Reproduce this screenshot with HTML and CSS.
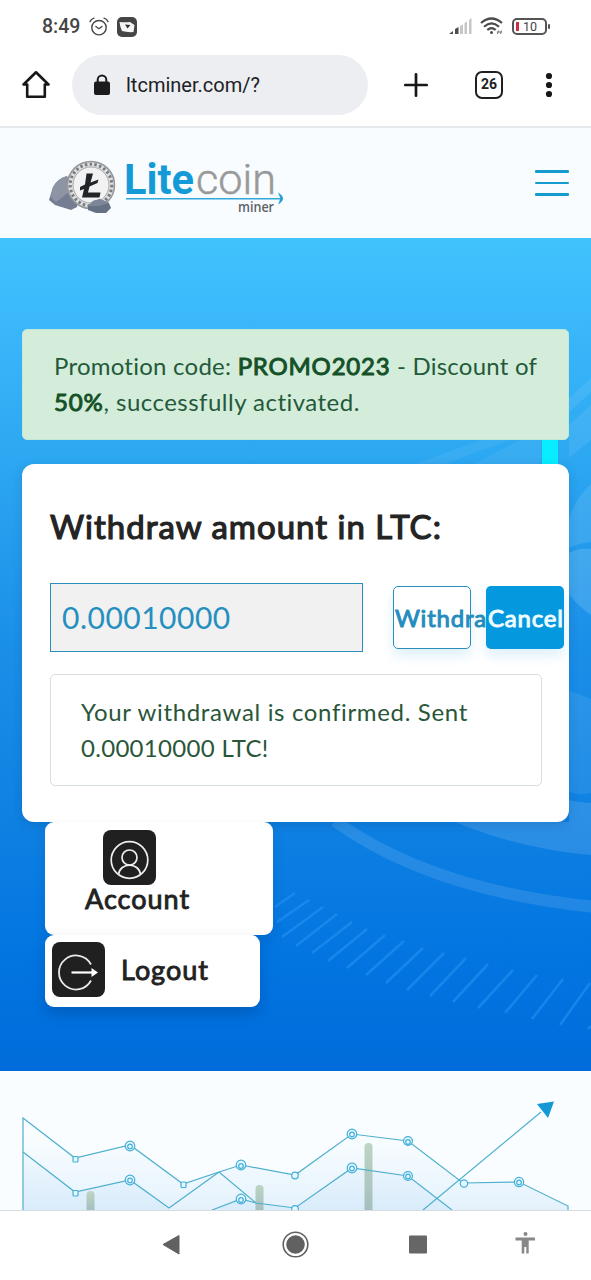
FILE: index.html
```html
<!DOCTYPE html>
<html lang="en">
<head>
<meta charset="utf-8">
<title>Litecoin miner</title>
<link rel="stylesheet" href="styles.css">
</head>
<body>
<div class="phone">
  <div class="status">
    <span class="clock">8:49</span>
    <svg class="alarm" width="20" height="20" viewBox="0 0 20 20" fill="none" stroke="#454545" stroke-width="1.4" stroke-linecap="round"><circle cx="10" cy="10.7" r="7.2"/><path d="M6.9 9.5l3 2.2 3-2.2M1 4.6Q2.2 2 5 1.2M19 4.6Q17.800 2 15 1.200"/></svg>
    <svg class="video" width="20" height="20" viewBox="0 0 20 20"><rect width="20" height="20" rx="5" fill="#454545"/><path d="M2.500 5Q8 5.500 13 5L17.500 8Q17 12 16.500 15Q10 15.500 5 14Q3 10 2.500 5Z" fill="#f5f5f5"/><path d="M8 7.500L13.500 8L10.500 11.500Z" fill="#333"/></svg>
    <svg class="signal" width="23" height="17" viewBox="0 0 23 17"><path d="M0 16L4 13V16ZM6 11L9.500 9V16H6Z" fill="#4d4d4d"/><path d="M11 8L14 6.500V16H11ZM15.500 5L18 3.500V16H15.500ZM20 2L22.500 0V16H20Z" fill="#c6c6c6"/></svg>
    <svg class="wifi" width="24" height="19" viewBox="0 0 24 19" fill="none" stroke="#4a4a4a" stroke-width="2.200"><path d="M1 6Q11.500-3 22 6M4 9.700Q11.500 3 19 9.700M7.300 13Q11.500 9.300 15.700 13"/><circle cx="11.500" cy="15.500" r="1.500" fill="#4a4a4a" stroke="none"/><path d="M18.500 13.500L17.500 17M21.500 13.500L20.500 17M17 15H22" stroke="#777" stroke-width="1"/></svg>
    <span class="battery"><i></i>10</span>
  </div>

  <div class="toolbar">
    <svg class="home" width="28" height="29" viewBox="0 0 28 29" fill="none" stroke="#171717" stroke-width="2.600" stroke-linejoin="round"><path d="M1.500 14.500L14 2.300L26.500 14.500H22.800V26.700H5.200V14.500Z"/></svg>
    <div class="address">
      <svg width="18" height="22" viewBox="0 0 18 22"><rect x="1" y="7.500" width="16" height="13.500" rx="2" fill="#1b1b1e"/><path d="M4.700 8V5.700a4.300 4.300 0 0 1 8.600 0V8" fill="none" stroke="#1b1b1e" stroke-width="2"/></svg>
      <span>ltcminer.com/?</span>
    </div>
    <svg class="plus" width="24" height="24" viewBox="0 0 24 24" stroke="#171717" stroke-width="2.700" stroke-linecap="round"><path d="M12 1.300V22.700M1.300 12H22.700"/></svg>
    <span class="tabs">26</span>
    <svg class="dots" width="8" height="26" viewBox="0 0 8 26" fill="#171717"><circle cx="4" cy="4" r="3.100"/><circle cx="4" cy="13" r="3.100"/><circle cx="4" cy="22" r="3.100"/></svg>
  </div>

  <header class="header">
    <svg class="logo" width="250" height="70" viewBox="0 0 250 70">
      <path d="M1 44L5 31Q9 23 19 20L31 43L29 51L23 54L7 49Z" fill="#747d91"/>
      <path d="M5 31Q9 23 19 20L20 37L8 46L3 41Z" fill="#8d94a4"/>
      <circle cx="43" cy="29" r="23.500" fill="#dedfe1" stroke="#96989b" stroke-width="1.600"/>
      <circle cx="43" cy="29" r="20.800" fill="none" stroke="#777b7e" stroke-width="3" stroke-dasharray="2.400 2.400"/>
      <circle cx="43" cy="29" r="18" fill="#f2f2f3" stroke="#aaa" stroke-width="1"/>
      <path d="M38.500 17.500H45L42.500 26.500L50.500 23.500L49.500 27L41.500 30.500L40 36.500H52.500L51.500 41.500H34L36 33L32 34.500V31L37 28.500Z" fill="#222527"/>
      <path d="M40 50L45 45L52 43L61 47L63 52L58 57H48L40 54Z" fill="#667184"/>
      <path d="M40 50L45 45L52 43L61 47L51 50Z" fill="#7d8798"/>
      <text class="word lite" x="76" y="37.500" textLength="70" lengthAdjust="spacingAndGlyphs">Lite</text>
      <text class="word coin" x="148" y="37.500" textLength="80" lengthAdjust="spacingAndGlyphs">coin</text>
      <path d="M78 42.700H233" stroke="#31a8db" stroke-width="1.400"/><path d="M230 36.500Q240 42.500 230 48.500L232.500 42.500Z" fill="#229fd6"/>
      <text class="word mine" x="190" y="56" textLength="36" lengthAdjust="spacingAndGlyphs">miner</text>
    </svg>
    <span class="menu"><i></i><i></i><i></i></span>
  </header>

  <main class="hero">
    <svg class="scenery" width="591" height="833" viewBox="0 238 591 833">
      <g fill="#fff">
        <path d="M569 398L591 378V392L569 412ZM569 425L591 405V440L569 458Z" opacity=".08"/>
        <path d="M410 466L480 440H510L440 466ZM470 466L520 440H541V462L535 466Z" opacity=".06"/>
        <path d="M569 520Q575 498 591 484V542Q579 543 569 548Z" opacity=".1"/>
        <path d="M569 553Q578 548 591 549V615Q578 606 569 594Z" opacity=".14"/>
        <path d="M569 691Q580 694 591 699V793Q580 796 569 792Z" opacity=".08"/>
        <path d="M455 822Q520 849 591 855V803Q577 802 569 800V822Z" opacity=".12"/>
      </g>
      <path d="M335 821Q430 890 595 907" fill="none" stroke="#fff" stroke-width="12" opacity=".11"/>
      <rect x="542" y="438" width="16" height="28" fill="#08edff"/>
      <path d="M275 907L295 893M277 922L309 900M282 937L323 907M296 946L337 914M312 953L352 922M328 961L367 929M347 968L385 935M366 975L404 941M386 983L423 948M407 990L444 953M430 996L466 958M453 1002L488 964M478 1008L513 970M505 1013L537 975M532 1019L563 979M560 1025L590 983M588 1029L591 1026" stroke="#2c98f5" stroke-width="2.600" opacity=".5"/>
    </svg>

    <div class="promo"><span class="p1">Promotion code: <b>PROMO2023</b> - Discount of</span><br><span class="p2"><b>50%</b>, successfully activated.</span></div>

    <section class="card">
      <h1>Withdraw amount in LTC:</h1>
      <div class="form">
        <div class="field">0.00010000</div>
        <div class="button outline"><span>Withdraw</span></div>
        <div class="button solid"><span>Cancel</span></div>
      </div>
      <div class="notice"><span class="n1">Your withdrawal is confirmed. Sent</span><br><span class="n2">0.00010000 LTC!</span></div>
    </section>

    <div class="account">
      <svg width="53" height="55" viewBox="0 0 53 55"><rect width="53" height="55" rx="8" fill="#202020"/><g fill="none" stroke="#eee" stroke-width="1.700"><circle cx="26.500" cy="30" r="18.300"/><circle cx="26.500" cy="27.500" r="7.500"/><path d="M15.500 44.500C17 32 36 32 37.500 44.500"/></g></svg>
      <span>Account</span>
    </div>
    <div class="logout">
      <svg width="53" height="55" viewBox="0 0 53 55"><rect width="53" height="55" rx="8" fill="#202020"/><path d="M39 22.500A17 17 0 1 0 39 38.500" fill="none" stroke="#e8e8e8" stroke-width="1.800"/><path d="M19.500 30.500H41" stroke="#fff" stroke-width="2.200"/><path d="M39.500 26L46 30.500L39.500 35Z" fill="#fff"/></svg>
      <span>Logout</span>
    </div>
  </main>

  <div class="chart">
    <svg width="591" height="138" viewBox="0 1072 591 138">
      <defs>
        <linearGradient id="area" x1="0" y1="1130" x2="0" y2="1210" gradientUnits="userSpaceOnUse"><stop offset="0" stop-color="#d8edfc" stop-opacity="0"/><stop offset="1" stop-color="#cfe6f9" stop-opacity=".5"/></linearGradient>
        <linearGradient id="bar" x1="0" y1="0" x2="0" y2="1"><stop offset="0" stop-color="#bdd5c2"/><stop offset="1" stop-color="#a5bfc0"/></linearGradient>
      </defs>
      <path d="M23 1118L75 1158L130 1145L183 1184L241 1165L295 1175L352 1134L408 1141L463 1183L519 1182L568 1206V1210H23Z" fill="url(#area)"/>
      <path d="M23 1152L75 1192L130 1180L169 1210H23ZM213 1210L241 1199L295 1208L352 1168L408 1176L452 1210Z" fill="url(#area)"/>
      <g fill="url(#bar)"><path d="M86.500 1210V1195q0-4 4-4t4 4V1210Z"/><path d="M255.500 1210V1189q0-4 4-4t4 4V1210Z"/><path d="M364.500 1210V1147q0-4 4-4t4 4V1210Z"/></g>
      <g fill="none" stroke="#4fafcd" stroke-width="1.200">
        <path d="M23 1210V1118L75 1158L130 1145L183 1184L219 1172L241 1165L295 1175L352 1134L408 1141L463 1183L519 1182L568 1206V1210"/>
        <path d="M23 1152L75 1192L130 1180L169 1208L219 1172L256 1203L295 1208L352 1168L408 1176L452 1210M212 1210L241 1199L256 1203"/>
        <path d="M423 1210L541 1112"/>
      </g>
      <path d="M537 1104L554 1101.500L548 1118Z" fill="#1599d5"/>
      <g fill="#e6f8ff" stroke="#43afd8" stroke-width="1.200">
        <g><circle cx="130" cy="1146" r="4.800"/><circle cx="130" cy="1180" r="4.800"/><circle cx="241" cy="1165" r="4.800"/><circle cx="241" cy="1199" r="4.800"/><circle cx="352" cy="1134" r="4.800"/><circle cx="352" cy="1168" r="4.800"/><circle cx="408" cy="1141" r="4.400"/><circle cx="408" cy="1176" r="4.400"/><circle cx="519" cy="1182" r="4.600"/></g>
        <g><rect x="73" y="1156.500" width="5" height="5.500" rx="1"/><rect x="73" y="1190.500" width="5" height="5.500" rx="1"/><circle cx="130" cy="1146.500" r="2.300"/><circle cx="130" cy="1180.500" r="2.300"/><rect x="181" y="1182" width="5" height="5.500" rx="1"/><circle cx="241" cy="1166" r="2.300"/><circle cx="241" cy="1200" r="2.300"/><circle cx="295" cy="1175.500" r="3.300"/><circle cx="295" cy="1209" r="3.300"/><circle cx="352" cy="1134.500" r="2.300"/><circle cx="352" cy="1168.500" r="2.300"/><circle cx="408" cy="1142" r="2.300"/><circle cx="408" cy="1176.500" r="2.300"/><circle cx="464" cy="1183.500" r="3.700"/><circle cx="519" cy="1182.500" r="2.300"/></g>
      </g>
    </svg>
  </div>

  <nav class="nav">
    <svg width="591" height="69" viewBox="0 1211 591 69">
      <path d="M163 1244.500L179 1235.500V1254Z" fill="#616161" stroke="#616161" stroke-linejoin="round"/>
      <circle cx="295.500" cy="1244.500" r="12.300" fill="none" stroke="#616161" stroke-width="1.600"/><circle cx="295.500" cy="1244.500" r="9.300" fill="#616161"/>
      <rect x="409" y="1235.500" width="18" height="18" rx="1" fill="#666"/>
      <g fill="#888"><circle cx="525.500" cy="1234" r="2"/><path d="M515.500 1237.500H535V1240.500H528.700V1253.500H526.300V1247H524.300V1253.500H521.700V1240.500H515.500Z"/></g>
    </svg>
  </nav>
</div>
</body>
</html>
```

FILE: styles.css
```css
* { box-sizing: border-box; }
body { margin: 0; background: #fff; font-family: Lato, "Open Sans", sans-serif; font-variant-ligatures: none; }
svg { display: block; flex: none; }
.phone { width: 591px; height: 1280px; overflow: hidden; display: flex; flex-direction: column; }

.status { height: 55px; padding: 0 42px 2px; display: flex; align-items: center; font-family: Roboto, sans-serif; color: #454545; }
.clock { width: 38px; font-size: 19.500px; font-weight: 500; white-space: nowrap; }
.alarm { margin-left: 9px; }
.video { margin-left: 8px; }
.signal { margin-left: auto; margin-right: 8px; }
.wifi { margin-right: 8px; }
.battery { position: relative; width: 35px; height: 17px; border: 2px solid #555; border-radius: 5px; padding-left: 9px; font-size: 12.500px; line-height: 13px; margin-right: 2px; }
.battery::after { content: ""; position: absolute; right: -5px; top: 4px; width: 2px; height: 5px; border-radius: 1px; background: #555; }
.battery i { position: absolute; left: 2px; top: 2px; width: 3px; height: 9px; background: #d12b45; }

.toolbar { height: 73px; padding: 0 38px 12px 22px; display: flex; align-items: center; border-bottom: 2px solid #e6e9eb; font-family: Roboto, sans-serif; color: #202124; }
.address { display: flex; align-items: center; gap: 15px; width: 296px; height: 60px; margin-left: 22px; padding-left: 21px; border-radius: 30px; background: #edeef2; font-size: 20px; white-space: nowrap; }
.plus { margin-left: 36px; }
.tabs { width: 28px; height: 28px; margin-left: 47px; border: 2.600px solid #202020; border-radius: 7px; text-align: center; font-size: 14px; font-weight: 700; line-height: 23px; }
.dots { margin-left: 42px; }

.header { height: 110px; padding: 28px 22px 0 48px; background: #f8fcff; display: flex; justify-content: space-between; align-items: flex-start; }
.word { font-family: Roboto, sans-serif; font-size: 42px; }
.lite { font-weight: 700; fill: #149bd7; }
.coin { font-weight: 300; fill: #999; stroke: #999; stroke-width: .5px; }
.mine { font-family: "Open Sans", sans-serif; font-size: 14px; font-weight: 600; fill: #5d6266; }
.menu { width: 34px; margin-top: 14px; display: grid; gap: 9px; }
.menu i { height: 2.500px; background: #149cce; border-radius: 1px; }

.hero { position: relative; height: 833px; padding: 91px 22px 0; background: linear-gradient(#41c3fc 0, #3ab7fb 90px, #2ca7f1 220px, #1b90e8 400px, #0e80e2 590px, #0275e1 720px, #006cdb 100%); }
.scenery { position: absolute; left: 0; top: 0; }
.hero > :not(.scenery) { position: relative; }
.promo, .notice { font-size: 24px; line-height: 36px; white-space: nowrap; }
.promo { height: 111px; padding: 18px 31px; border: 1px solid #c3e8d5; border-radius: 5px; background: #d3edda; color: #24593a; }
.promo b { color: #155128; font-weight: 400; -webkit-text-stroke: 1px; letter-spacing: .8px; }
.p1 { letter-spacing: .24px; }
.p2 { letter-spacing: .48px; }
.n1 { letter-spacing: .66px; }
.n2 { letter-spacing: .3px; }
.card { height: 358px; margin-top: 24px; padding: 42px 5px 0 28px; border-radius: 12px; background: #fff; box-shadow: 0 3px 10px rgba(0, 50, 100, .17); }
h1 { margin: 0; font-size: 33px; line-height: 40px; font-weight: 400; -webkit-text-stroke: 1.200px; letter-spacing: 1px; color: #242424; white-space: nowrap; }
.form { display: flex; margin-top: 37px; align-items: center; }
.field { width: 313px; height: 69px; border: 1px solid #278fb9; background: #f1f1f1; color: #258fc0; font-size: 30px; line-height: 66px; padding-left: 11px; letter-spacing: .5px; }
.button { width: 78px; height: 63px; border-radius: 5px; font-size: 24px; line-height: 61px; font-weight: 400; -webkit-text-stroke: 1px; letter-spacing: .8px; white-space: nowrap; box-shadow: 0 7px 12px rgba(0, 150, 220, .13); }
.outline { margin-left: 30px; border: 1px solid #278fb9; color: #248dbd; padding-left: 1px; }
.solid { position: relative; margin-left: 15px; background: #0499de; color: #effbff; padding: 1px 0 0 2px; }
.notice { width: 492px; height: 112px; margin-top: 22px; padding: 19px 30px; border: 1px solid #d6dfda; border-radius: 5px; color: #295638; }
.account, .logout { margin-left: 23px; border-radius: 9px; background: #fff; color: #222; font-size: 27px; -webkit-text-stroke: .9px; letter-spacing: 1px; }
.account { width: 228px; height: 113px; padding: 8px 0 0 40px; box-shadow: 0 6px 12px rgba(0, 45, 100, .15); }
.account svg { margin-left: 18px; }
.account span { display: block; line-height: 28px; white-space: nowrap; }
.logout { display: flex; width: 215px; height: 72px; padding: 7px; gap: 16px; box-shadow: 0 7px 13px rgba(0, 45, 100, .25); }
.logout span { line-height: 55px; }

.chart { height: 139px; padding-top: 1px; background: #f9fdff; }
.nav { height: 70px; border-top: 1px solid #d7dce0; background: #fff; }
```
